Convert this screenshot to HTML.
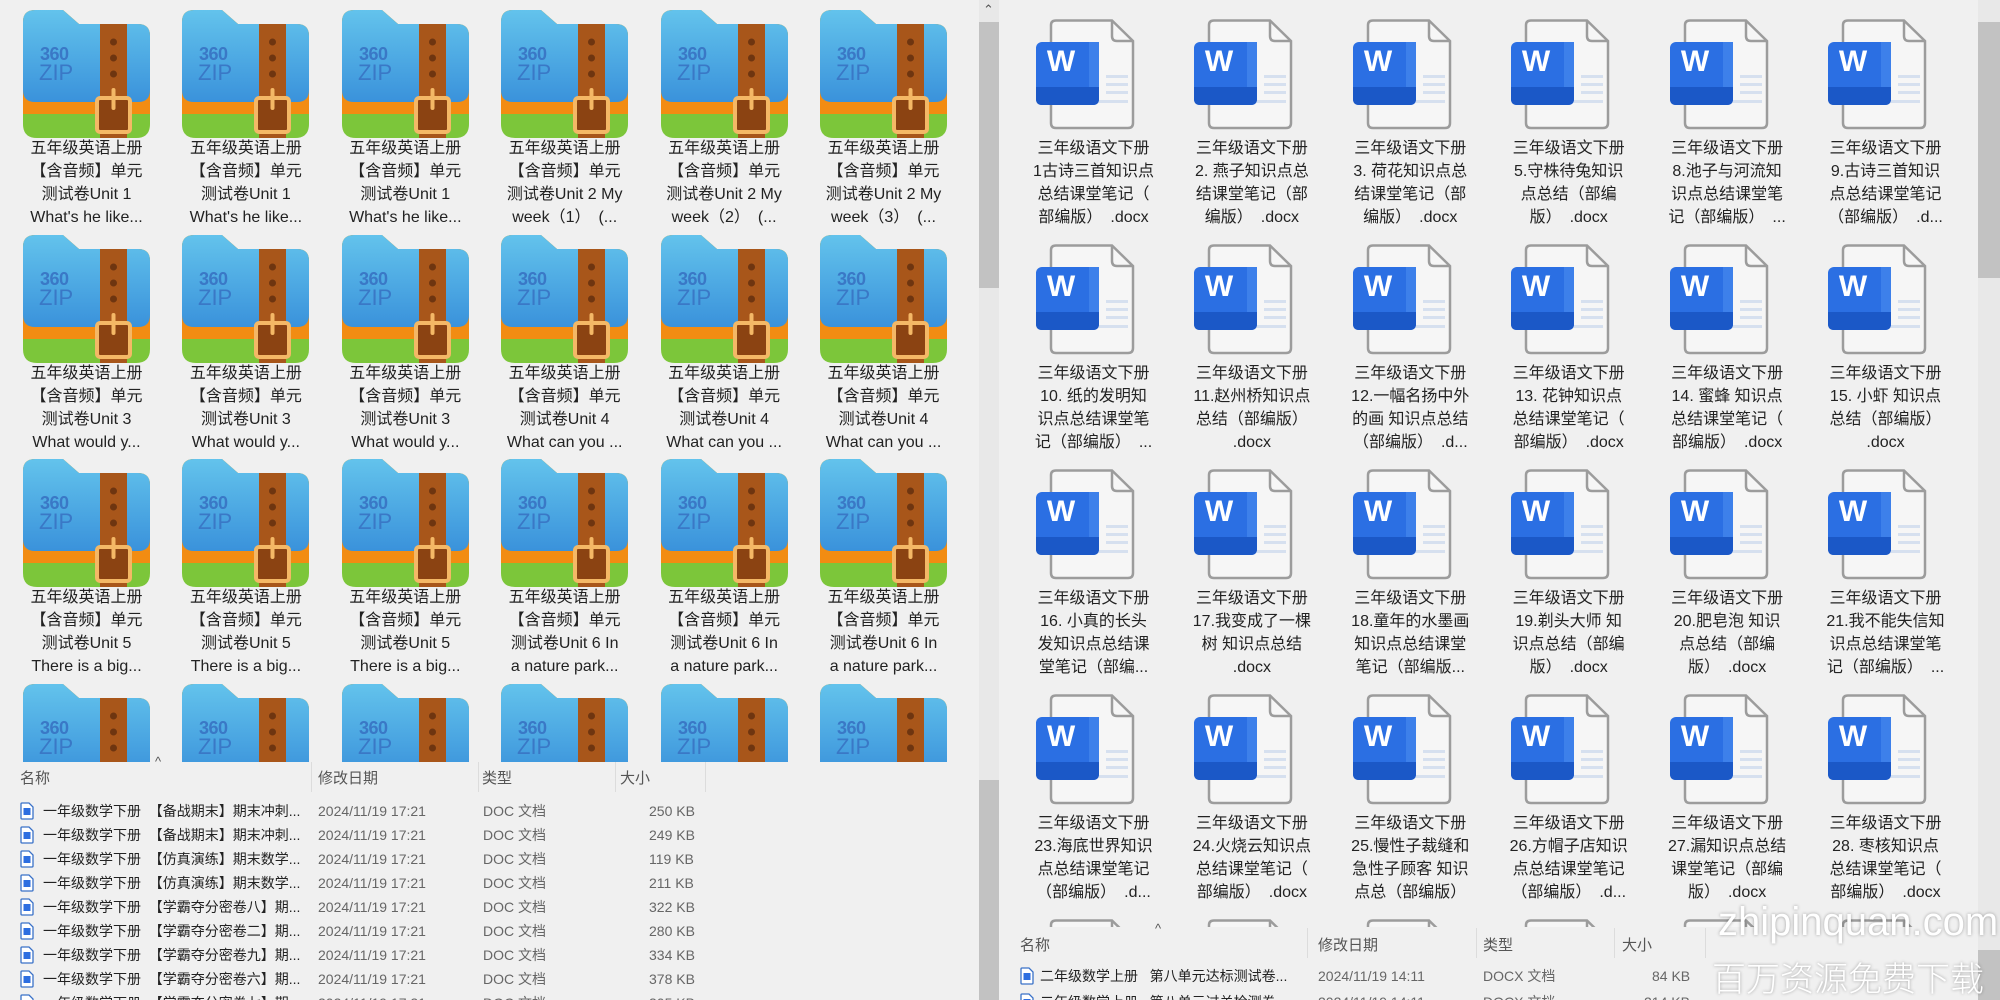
<!DOCTYPE html>
<html style="overflow:hidden;width:2000px;height:1000px"><head><meta charset="utf-8"><style>
*{margin:0;padding:0;box-sizing:border-box}
body{width:2000px;height:1000px;overflow:hidden;background:#f0f0f0;font-family:"Liberation Sans","Noto Sans CJK SC",sans-serif;color:#1a1a1a;position:relative}
.grid{position:absolute;overflow:hidden}
.cell{position:absolute;width:159px;height:225px}
.cell svg{position:absolute}
.lab{position:absolute;top:137px;left:2px;width:155px;text-align:center;font-size:16px;line-height:23px;white-space:nowrap;color:#222}
.sb{position:absolute;background:#e8e8e8}
.thumb{position:absolute;background:#c2c2c2}
.hdr{position:absolute;font-size:15px;color:#555}
.sep{position:absolute;width:1px;background:#dcdcdc}
.row{position:absolute;font-size:14px;color:#222;white-space:nowrap;height:24px;line-height:24px}
.row span{position:absolute}
.g{color:#666}
.wm{position:absolute;color:#fff;text-shadow:0 0 3px rgba(0,0,0,.35);font-weight:300;white-space:nowrap}
#clip{position:absolute;left:0;top:0;width:2000px;height:1000px;overflow:hidden}
</style></head><body><div id="clip">
<svg width="0" height="0" style="position:absolute">
<defs>
<linearGradient id="bl" x1="0" y1="0" x2="0" y2="1"><stop offset="0" stop-color="#63c3ec"/><stop offset="1" stop-color="#3a92db"/></linearGradient>
<symbol id="zip" viewBox="0 0 127 128">
<path d="M0 12 Q0 0 12 0 H40 L56 14 H115 Q127 14 127 26 V114 Q127 128 113 128 H14 Q0 128 0 114Z" fill="#7cc63a"/>
<path d="M0 12 Q0 0 12 0 H40 L56 14 H115 Q127 14 127 26 V104 H0Z" fill="#f28c12"/>
<path d="M0 12 Q0 0 12 0 H40 L56 14 H115 Q127 14 127 26 V80 Q127 92 115 92 H12 Q0 92 0 80Z" fill="url(#bl)"/>
<text x="17" y="50" font-family="Liberation Sans" font-weight="bold" font-size="18" fill="#3a78c6" letter-spacing="-0.5">360</text>
<text x="16" y="70" font-family="Liberation Sans" font-size="22" fill="#3a78c6">ZIP</text>
<rect x="77" y="14" width="27" height="114" fill="#a8561a"/>
<circle cx="90.5" cy="32" r="3.5" fill="#6e3510"/><circle cx="90.5" cy="48" r="3.5" fill="#6e3510"/><circle cx="90.5" cy="64" r="3.5" fill="#6e3510"/>
<rect x="74" y="88" width="33" height="34" rx="3" fill="#8b4312" stroke="#f4b866" stroke-width="4"/>
<rect x="88.5" y="78" width="4" height="22" rx="2" fill="#f4b866"/>
</symbol>
<symbol id="doc" viewBox="0 0 100 112">
<path d="M20 1.5 H76 L97 22 V104 Q97 109 92 109 H20 Q15 109 15 104 V6 Q15 1.5 20 1.5Z" fill="#f6f6f6" stroke="#9c9c9c" stroke-width="2.5"/>
<path d="M76 1.5 V17 Q76 22 81 22 H97" fill="none" stroke="#9c9c9c" stroke-width="2.5"/>
<rect x="70" y="56" width="22" height="3" fill="#d6e0ef"/><rect x="70" y="64" width="22" height="3" fill="#d6e0ef"/><rect x="70" y="72" width="22" height="3" fill="#d6e0ef"/><rect x="35" y="81" width="57" height="3" fill="#d6e0ef"/>
<rect x="0" y="23" width="63" height="63" rx="6" fill="#2b6fe3"/>
<path d="M0 68 H63 V80 Q63 86 57 86 H6 Q0 86 0 80Z" fill="#1b58c7"/>
<rect x="53" y="23" width="10" height="45" fill="#3d80ea"/>
<text x="25" y="52" text-anchor="middle" font-family="Liberation Sans" font-weight="bold" font-size="30" fill="#fff">W</text>
</symbol>
<symbol id="sm" viewBox="0 0 14 18"><path d="M2 1 H9 L13 5 V16 Q13 17 12 17 H2 Q1 17 1 16 V2 Q1 1 2 1Z" fill="#fff" stroke="#3a72c8" stroke-width="1.3"/><rect x="3.5" y="6" width="7" height="7" fill="#2d6ee0"/></symbol>
</defs></svg>

<div class="grid" style="left:0;top:0;width:978px;height:762px"><div id="lg"></div></div>
<div class="grid" style="left:999px;top:0;width:978px;height:927px"><div id="rg"></div></div>

<div class="sb" style="left:979px;top:0;width:20px;height:1000px"></div>
<div class="thumb" style="left:979px;top:22px;width:20px;height:266px"></div>
<div class="thumb" style="left:979px;top:780px;width:20px;height:220px"></div>
<div style="position:absolute;left:983px;top:2px;font-size:13px;color:#555">&#8963;</div>
<div class="sb" style="left:1978px;top:0;width:22px;height:1000px"></div>
<div class="thumb" style="left:1978px;top:22px;width:22px;height:256px"></div>
<div class="thumb" style="left:1978px;top:950px;width:22px;height:50px"></div>

<div class="hdr" style="left:20px;top:767px">名称</div>
<div class="hdr" style="left:155px;top:754px;font-size:13px">^</div>
<div class="hdr" style="left:318px;top:767px">修改日期</div>
<div class="hdr" style="left:482px;top:767px">类型</div>
<div class="hdr" style="left:620px;top:767px">大小</div>
<div class="sep" style="left:311px;top:762px;height:30px"></div>
<div class="sep" style="left:478px;top:762px;height:30px"></div>
<div class="sep" style="left:615px;top:762px;height:30px"></div>
<div class="sep" style="left:705px;top:762px;height:30px"></div>
<div id="ll"></div>

<div class="hdr" style="left:1020px;top:934px">名称</div>
<div class="hdr" style="left:1155px;top:921px;font-size:13px">^</div>
<div class="hdr" style="left:1318px;top:934px">修改日期</div>
<div class="hdr" style="left:1483px;top:934px">类型</div>
<div class="hdr" style="left:1622px;top:934px">大小</div>
<div class="sep" style="left:1307px;top:928px;height:30px"></div>
<div class="sep" style="left:1476px;top:928px;height:30px"></div>
<div class="sep" style="left:1614px;top:928px;height:30px"></div>
<div class="sep" style="left:1705px;top:928px;height:30px"></div>
<div class="row" style="left:1020px;top:964px;width:700px"><svg style="position:absolute;left:0;top:3px" width="14" height="18"><use href="#sm"/></svg><span style="left:20px">二年级数学上册&nbsp;&nbsp;&nbsp;第八单元达标测试卷...</span><span class="g" style="left:298px">2024/11/19 14:11</span><span class="g" style="left:463px">DOCX 文档</span><span class="g" style="left:632px">84 KB</span></div>
<div class="row" style="left:1020px;top:990px;width:700px"><svg style="position:absolute;left:0;top:3px" width="14" height="18"><use href="#sm"/></svg><span style="left:20px">二年级数学上册&nbsp;&nbsp;&nbsp;第八单元过关检测卷...</span><span class="g" style="left:298px">2024/11/19 14:11</span><span class="g" style="left:463px">DOCX 文档</span><span class="g" style="left:624px">214 KB</span></div>

<div class="wm" style="left:1718px;top:900px;font-size:40px">zhipinquan.com</div>
<div class="wm" style="left:1712px;top:952px;font-size:34px;letter-spacing:0px">百万资源免费下载</div>
</div>
<script>
var L=[
[["五年级英语上册","【含音频】单元","测试卷Unit 1","What's he like..."],["五年级英语上册","【含音频】单元","测试卷Unit 1","What's he like..."],["五年级英语上册","【含音频】单元","测试卷Unit 1","What's he like..."],["五年级英语上册","【含音频】单元","测试卷Unit 2 My","week（1）　(..."],["五年级英语上册","【含音频】单元","测试卷Unit 2 My","week（2）　(..."],["五年级英语上册","【含音频】单元","测试卷Unit 2 My","week（3）　(..."]],
[["五年级英语上册","【含音频】单元","测试卷Unit 3","What would y..."],["五年级英语上册","【含音频】单元","测试卷Unit 3","What would y..."],["五年级英语上册","【含音频】单元","测试卷Unit 3","What would y..."],["五年级英语上册","【含音频】单元","测试卷Unit 4","What can you ..."],["五年级英语上册","【含音频】单元","测试卷Unit 4","What can you ..."],["五年级英语上册","【含音频】单元","测试卷Unit 4","What can you ..."]],
[["五年级英语上册","【含音频】单元","测试卷Unit 5","There is a big..."],["五年级英语上册","【含音频】单元","测试卷Unit 5","There is a big..."],["五年级英语上册","【含音频】单元","测试卷Unit 5","There is a big..."],["五年级英语上册","【含音频】单元","测试卷Unit 6 In","a nature park..."],["五年级英语上册","【含音频】单元","测试卷Unit 6 In","a nature park..."],["五年级英语上册","【含音频】单元","测试卷Unit 6 In","a nature park..."]],
[[],[],[],[],[],[]]];
var h="";
for(var r=0;r<4;r++)for(var c=0;c<6;c++){var t=L[r][c];
h+='<div class="cell" style="left:'+(7+159.4*c)+'px;top:'+(224.6*r)+'px"><svg style="left:16px;top:10px" width="127" height="128"><use href="#zip"/></svg><div class="lab">'+t.join("<br>")+'</div></div>';}
document.getElementById("lg").innerHTML=h;
var S="三年级语文下册";
var R=[
[["1古诗三首知识点","总结课堂笔记（","部编版）　.docx"],["2. 燕子知识点总","结课堂笔记（部","编版）　.docx"],["3. 荷花知识点总","结课堂笔记（部","编版）　.docx"],["5.守株待兔知识","点总结（部编","版）　.docx"],["8.池子与河流知","识点总结课堂笔","记（部编版）　..."],["9.古诗三首知识","点总结课堂笔记","（部编版）　.d..."]],
[["10. 纸的发明知","识点总结课堂笔","记（部编版）　..."],["11.赵州桥知识点","总结（部编版）",".docx"],["12.一幅名扬中外","的画 知识点总结","（部编版）　.d..."],["13. 花钟知识点","总结课堂笔记（","部编版）　.docx"],["14. 蜜蜂 知识点","总结课堂笔记（","部编版）　.docx"],["15. 小虾 知识点","总结（部编版）",".docx"]],
[["16. 小真的长头","发知识点总结课","堂笔记（部编..."],["17.我变成了一棵","树 知识点总结",".docx"],["18.童年的水墨画","知识点总结课堂","笔记（部编版..."],["19.剃头大师 知","识点总结（部编","版）　.docx"],["20.肥皂泡 知识","点总结（部编","版）　.docx"],["21.我不能失信知","识点总结课堂笔","记（部编版）　..."]],
[["23.海底世界知识","点总结课堂笔记","（部编版）　.d..."],["24.火烧云知识点","总结课堂笔记（","部编版）　.docx"],["25.慢性子裁缝和","急性子顾客 知识","点总（部编版）"],["26.方帽子店知识","点总结课堂笔记","（部编版）　.d..."],["27.漏知识点总结","课堂笔记（部编","版）　.docx"],["28. 枣核知识点","总结课堂笔记（","部编版）　.docx"]],
[[],[],[],[],[],[]]];
h="";
for(var r=0;r<5;r++)for(var c=0;c<6;c++){var t=R[r][c];var tx=t.length?[S].concat(t):[];
h+='<div class="cell" style="left:'+(15+158.4*c)+'px;top:'+(225*r)+'px"><svg style="left:22px;top:19px" width="100" height="112"><use href="#doc"/></svg><div class="lab">'+tx.join("<br>")+'</div></div>';}
document.getElementById("rg").innerHTML=h;
var LL=[["【备战期末】期末冲刺...","250 KB"],["【备战期末】期末冲刺...","249 KB"],["【仿真演练】期末数学...","119 KB"],["【仿真演练】期末数学...","211 KB"],["【学霸夺分密卷八】期...","322 KB"],["【学霸夺分密卷二】期...","280 KB"],["【学霸夺分密卷九】期...","334 KB"],["【学霸夺分密卷六】期...","378 KB"],["【学霸夺分密卷七】期...","305 KB"]];
h="";
for(var i=0;i<LL.length;i++){h+='<div class="row" style="left:20px;top:'+(799+24*i)+'px;width:700px"><svg style="position:absolute;left:0;top:3px" width="14" height="18"><use href="#sm"/></svg><span style="left:23px">一年级数学下册&nbsp;&nbsp;'+LL[i][0]+'</span><span class="g" style="left:298px">2024/11/19 17:21</span><span class="g" style="left:463px">DOC 文档</span><span class="g" style="left:629px">'+LL[i][1]+'</span></div>';}
document.getElementById("ll").innerHTML=h;
</script>
</body></html>
